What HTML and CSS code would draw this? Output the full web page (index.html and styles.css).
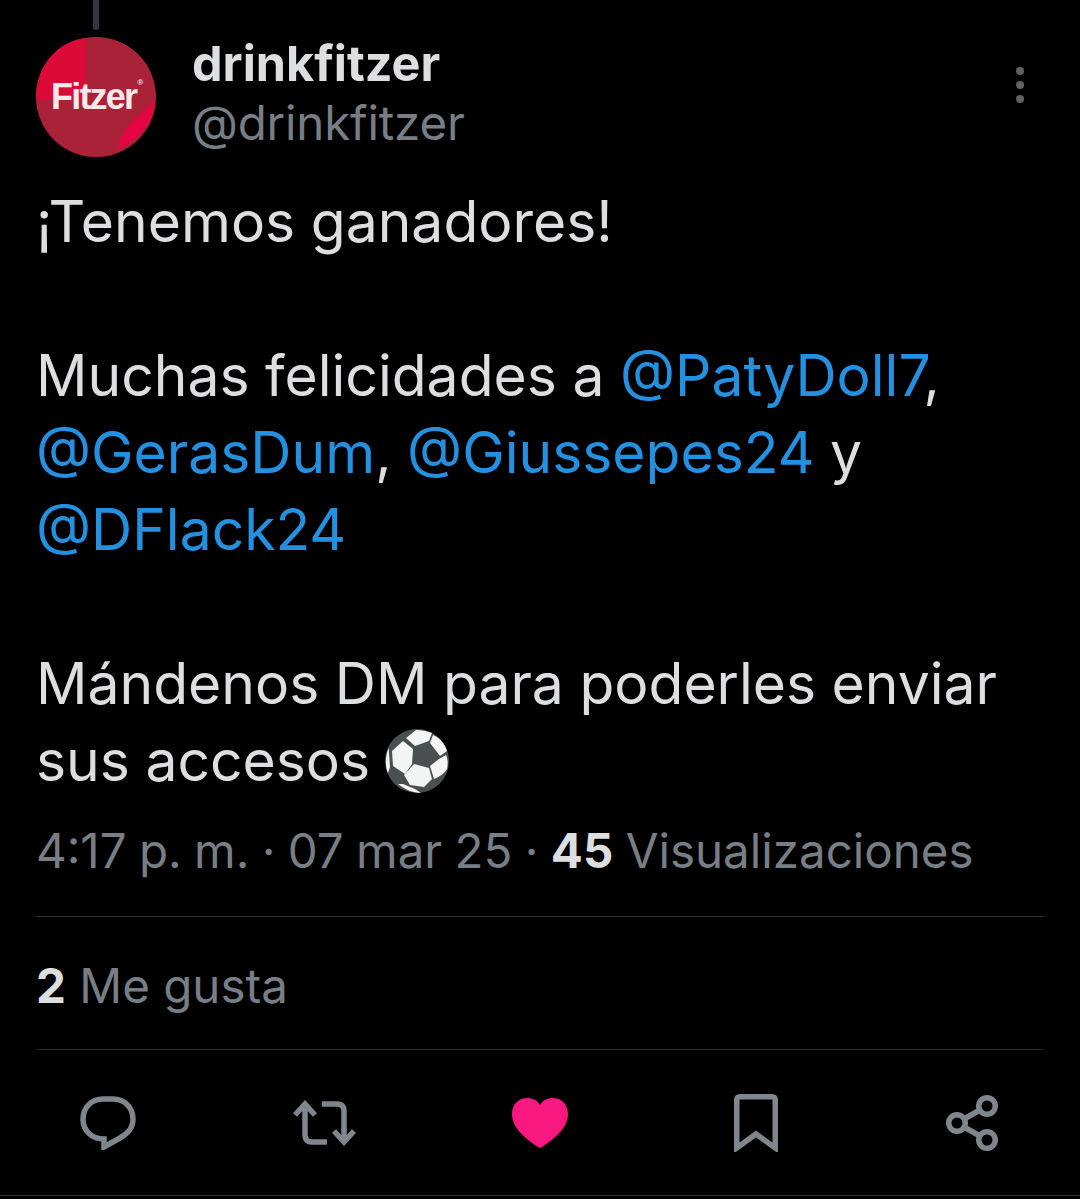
FILE: index.html
```html
<!DOCTYPE html>
<html lang="es">
<head>
<meta charset="utf-8">
<title>drinkfitzer</title>
<link rel="stylesheet" href="styles.css">
</head>
<body>
<main class="tweet">
  <div class="thread-line"></div>
  <header class="author">
    <div class="avatar">
      <svg class="avatar-art" viewBox="0 0 120 120" aria-hidden="true">
        <circle cx="60" cy="60" r="60" fill="#a92238"/>
        <path d="M50 1 C22 4 0 28 0 60 L0 62 L50 62Z" fill="#dc0a37"/>
        <path d="M119 62 C108 78 88 84 81 112 C100 106 120 84 119 62Z" fill="#e60445"/>
      </svg>
      <span class="avatar-name">Fitzer<sup class="reg">®</sup></span>
    </div>
    <div class="names">
      <div class="display-name">drinkfitzer</div>
      <div class="handle">@drinkfitzer</div>
    </div>
    <div class="more"><i></i><i></i><i></i></div>
  </header>
  <div class="body-text">
    <p>¡Tenemos ganadores!</p>
    <p>Muchas felicidades a <a>@PatyDoll7</a>,<br><a>@GerasDum</a>, <a>@Giussepes24</a> y<br><a>@DFlack24</a></p>
    <p>Mándenos DM para poderles enviar<br>sus accesos <svg class="ball" viewBox="0 0 64 64" aria-hidden="true">
      <circle cx="32" cy="32" r="32" fill="#4a4f50"/>
      <path d="M31 1 C28 3 25 6 21 9 L30 17 L44 12 L47 4 C42 2 36 1 31 1Z" fill="#f4f4f4"/>
      <path d="M48 6 L45 14 L55 27 L62 22 C60 15 55 9 48 6Z" fill="#f4f4f4"/>
      <path d="M18 12 L7 22 L8 37 L20 45 L27 35 L28 20Z" fill="#f4f4f4"/>
      <path d="M54 30 L45 37 L49 50 C54 48 60 44 62 40 C63 36 63 30 61 26Z" fill="#f4f4f4"/>
      <path d="M29 35 L19 46 L25 56 L39 58 L47 50 L44 39Z" fill="#f4f4f4"/>
      <path d="M13 55 C19 60 28 64 36 64 L30 60 L18 55Z" fill="#f4f4f4"/>
      <path d="M4 19 C0 26 0 38 3 44 L5 38 L4 24Z" fill="#f4f4f4"/>
    </svg></p>
  </div>
  <div class="meta">4:17 p. m. · 07 mar 25 · <b>45</b> Visualizaciones</div>
  <div class="stats"><b>2</b> Me gusta</div>
  <nav class="actions">
    <svg class="icon" width="56" height="54" viewBox="0 0 56 54" aria-hidden="true">
      <path d="M23 3 H33 C45 3 53 12 53 23 C53 33 47 38 40 42 L24 51 V43 C11 43 3 34 3 23 C3 12 11 3 23 3Z" fill="none" stroke="#7f868d" stroke-width="5.5" stroke-linejoin="miter"/>
    </svg>
    <svg class="icon" width="65" height="46" viewBox="0 0 65 46" aria-hidden="true">
      <path d="M3 15 L13 4 L23 15 M13 5 V35 Q13 42 20 42 H35 M30 4 H45 Q52 4 52 11 V41 M42 31 L52 42 L62 31" fill="none" stroke="#7f868d" stroke-width="5.5"/>
    </svg>
    <svg class="icon" width="56" height="50" viewBox="0 0 56 50" aria-hidden="true">
      <path d="M28 50 C16 43 0 31 0 16 C0 6 7 0 15 0 C21 0 25 2 28 7 C31 2 35 0 41 0 C49 0 56 6 56 16 C56 31 40 43 28 50Z" fill="#f91880"/>
    </svg>
    <svg class="icon" width="44" height="58" viewBox="0 0 44 58" aria-hidden="true">
      <path d="M2.750 54 V6 Q2.750 2.750 6 2.750 H38 Q41.250 2.750 41.250 6 V54 L22 40Z" fill="none" stroke="#7f868d" stroke-width="5.500"/>
    </svg>
    <svg class="icon" width="52" height="56" viewBox="0 0 52 56" aria-hidden="true">
      <g fill="none" stroke="#7f868d" stroke-width="5.500">
        <circle cx="11" cy="28" r="8.250"/><circle cx="41" cy="11" r="8.250"/><circle cx="41" cy="45" r="8.250"/>
        <path d="M18 24 L34 15 M18 32 L34 41"/>
      </g>
    </svg>
  </nav>
  <div class="end-rule"></div>
</main>
</body>
</html>
```
FILE: styles.css
```css
* { box-sizing: border-box; }
html, body { margin: 0; background: #000; }
body { width: 1080px; height: 1199px; overflow: hidden; font-family: Inter, "Noto Sans", sans-serif; color: #dcdedf; }
.tweet { padding: 0 36px; }
.thread-line { width: 6px; height: 30px; margin-left: 57px; background: #33363a; border-radius: 0 0 3px 3px; }
.author { display: flex; align-items: flex-start; margin-top: 7px; }
.avatar { width: 120px; height: 120px; position: relative; flex: none; display: flex; align-items: center; padding-left: 15px; }
.avatar-art { position: absolute; inset: 0; width: 120px; height: 120px; }
.avatar-name { position: relative; display: flex; font-family: "Liberation Sans", sans-serif; font-weight: 700; font-size: 36px; letter-spacing: -1.8px; color: #f6e9ea; }
.reg { font-size: 8px; line-height: 1; margin: 3px 0 0 1px; letter-spacing: 0; }
.names { margin-left: 36px; flex: 1; margin-top: -3px; }
.display-name { font-size: 48.500px; font-weight: 700; line-height: 60px; }
.handle { font-size: 47.500px; line-height: 58px; color: #777e85; letter-spacing: -0.2px; }
.more { width: 8px; margin: 30px 20px 0 0; display: flex; flex-direction: column; gap: 6px; }
.more i { display: block; width: 8px; height: 8px; border-radius: 50%; background: #5f6366; }
.body-text { margin-top: 26px; font-size: 57px; line-height: 77px; word-spacing: -0.5px; }
.body-text p { margin: 0 0 77px; }
.body-text p:last-child { margin-bottom: 0; }
.body-text a { color: #2490e0; }
.ball { width: 64px; height: 64px; vertical-align: -12px; margin-left: -1px; }
.meta { margin-top: 21px; font-size: 47.500px; line-height: 62px; word-spacing: -1px; color: #777e85; border-bottom: 1px solid #2f3336; height: 97px; }
.meta b, .stats b { color: #dcdedf; font-weight: 700; }
.stats { height: 133px; font-size: 47.500px; line-height: 138px; color: #777e85; border-bottom: 1px solid #2f3336; }
.actions { display: grid; grid-template-columns: repeat(5, 216px); justify-items: center; align-items: center; height: 145px; margin: 0 -36px; }
.icon { display: block; }
.end-rule { height: 1px; margin: 0 -36px; background: #2f3336; }
```
